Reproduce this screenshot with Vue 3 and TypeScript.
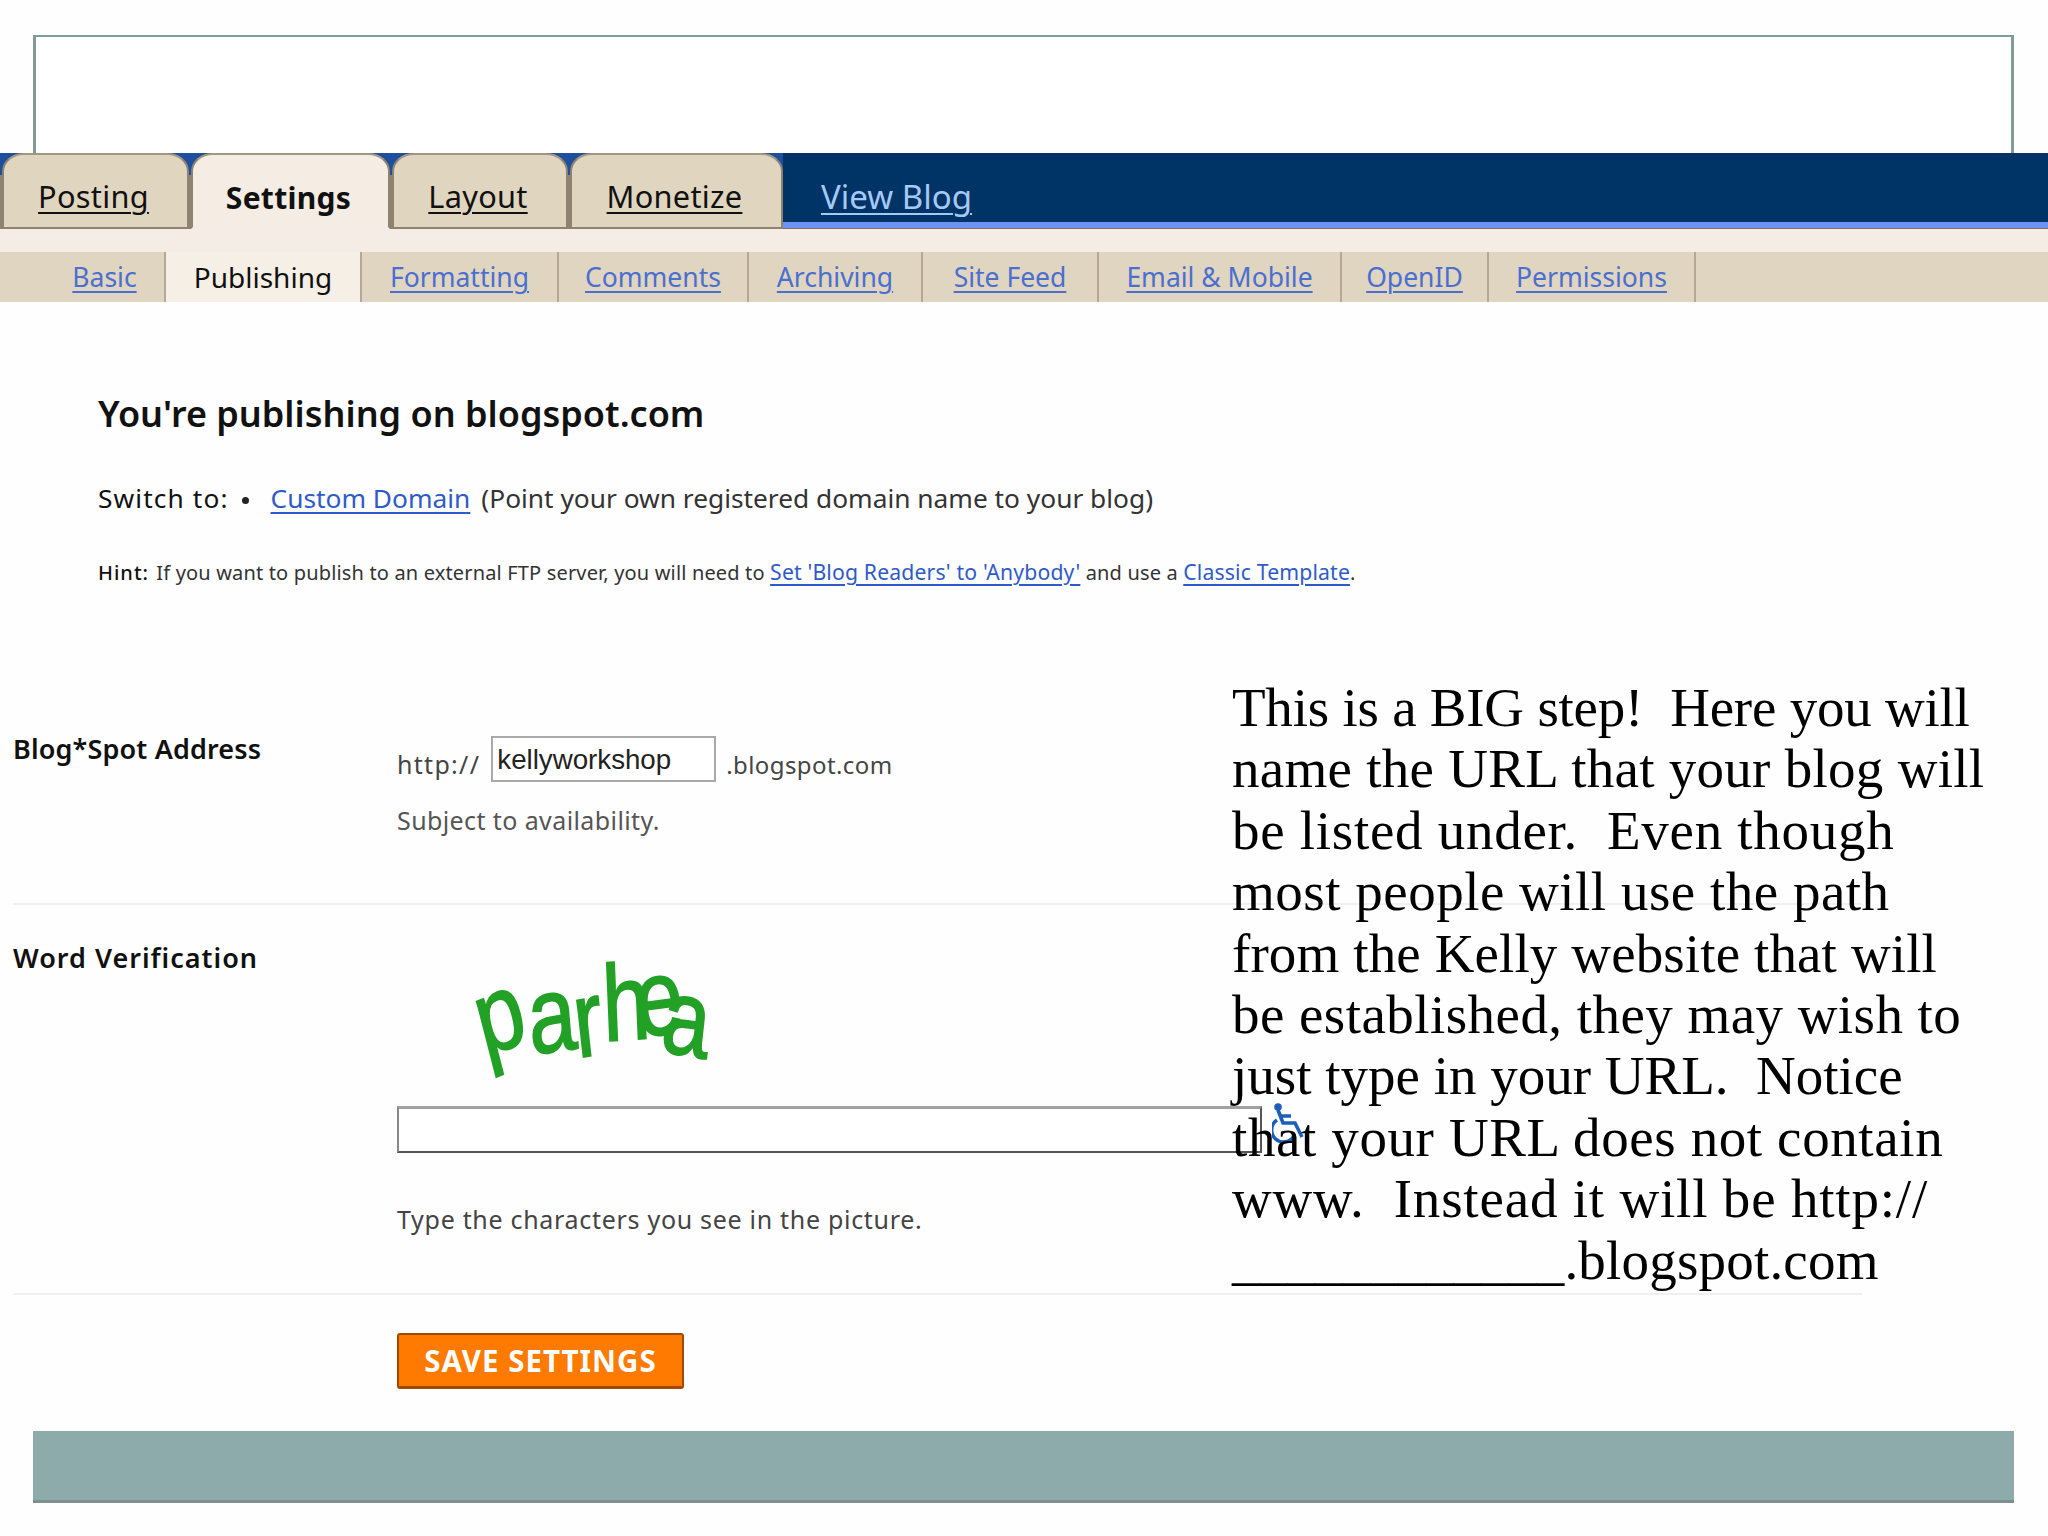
<script setup lang="ts">
interface NavItem { label: string; active?: boolean }
interface TextLine { text: string; spacing: number }
const tabs: NavItem[] = [
  { label: 'Posting' },
  { label: 'Settings', active: true },
  { label: 'Layout' },
  { label: 'Monetize' },
]
const subs: NavItem[] = [
  { label: 'Basic' },
  { label: 'Publishing', active: true },
  { label: 'Formatting' },
  { label: 'Comments' },
  { label: 'Archiving' },
  { label: 'Site Feed' },
  { label: 'Email & Mobile' },
  { label: 'OpenID' },
  { label: 'Permissions' },
]
const lines: TextLine[] = [
  { text: 'This is a BIG step!  Here you will', spacing: -0.23 },
  { text: 'name the URL that your blog will', spacing: 0.28 },
  { text: 'be listed under.  Even though', spacing: 0.72 },
  { text: 'most people will use the path', spacing: 0.5 },
  { text: 'from the Kelly website that will', spacing: 0.12 },
  { text: 'be established, they may wish to', spacing: 0.45 },
  { text: 'just type in your URL.  Notice', spacing: 0 },
  { text: 'that your URL does not contain', spacing: 0.61 },
  { text: 'www.  Instead it will be http://', spacing: 0.81 },
  { text: '____________.blogspot.com', spacing: 0.2 },
]
</script>

<template>
  <div class="slide">
    <div class="frame"></div>
    <nav class="bar">
      <div class="tabs">
        <a v-for="t in tabs" :key="t.label" class="tab" :class="{ on: t.active }">{{ t.label }}</a>
      </div>
      <a class="view">View Blog</a>
    </nav>
    <div class="band"></div>
    <div class="subnav">
      <a v-for="s in subs" :key="s.label" class="sub" :class="{ on: s.active }">{{ s.label }}</a>
    </div>

    <main class="content">
      <h1 class="title">You're publishing on blogspot.com</h1>
      <p class="switch"><span class="dk">Switch to:</span><span class="dot"></span><a class="link">Custom Domain</a><span class="paren">(Point your own registered domain name to your blog)</span></p>
      <p class="hint"><span class="dk hl">Hint:</span> If you want to publish to an external FTP server, you will need to <a class="link big">Set 'Blog Readers' to 'Anybody'</a> and use a <a class="link big">Classic Template</a>.</p>
    </main>

    <section class="form">
      <div class="row r1">
        <div class="label">Blog*Spot Address</div>
        <div class="field">
          <div class="addr">
            <span class="scheme">http://</span>
            <div class="inp">kellyworkshop</div>
            <span class="domain">.blogspot.com</span>
          </div>
          <p class="note sub1">Subject to availability.</p>
        </div>
      </div>
      <div class="row r2">
        <div class="label wide">Word Verification</div>
        <div class="field">
          <svg class="captcha" viewBox="0 0 350 150" width="350" height="150" aria-label="parhea">
            <g transform="scale(0.95 1.2)">
              <text x="93 141 190 218 254 276" y="90 87 90 76 73 84" rotate="-18 -6 -8 -3 -6 8" class="cap">parhea</text>
            </g>
          </svg>
          <div class="word"></div>
          <p class="note type">Type the characters you see in the picture.</p>
        </div>
      </div>
      <div class="actions">
        <button class="save" type="button">SAVE SETTINGS</button>
      </div>
    </section>

    <footer class="foot"></footer>

    <svg class="wheel" viewBox="0 0 34 42" width="34" height="42">
      <circle cx="6" cy="5" r="3.8" fill="#1c5fb8" />
      <path d="M6 8 L11 21 H23 L30 35 M9 14 H19" fill="none" stroke="#1c5fb8" stroke-width="3.6" />
      <path d="M5 18 A12 12 0 1 0 22 34" fill="none" stroke="#1c5fb8" stroke-width="3.6" />
    </svg>

    <div class="note-text">
      <div v-for="(l, i) in lines" :key="i" class="ln" :style="{ letterSpacing: l.spacing + 'px' }">{{ l.text }}</div>
    </div>
  </div>
</template>

<style>
html, body { margin: 0; background: #fff; }
</style>

<style scoped>
.slide {
  position: relative;
  width: 2048px;
  height: 1536px;
  overflow: hidden;
  background: #fefefe;
  font-family: "Noto Sans", "DejaVu Sans", sans-serif;
  color: #333;
}
.frame {
  height: 116px;
  margin: 35px 34px 0 33px;
  border: 3px solid #7f9c97;
  border-bottom: 0;
  border-top-width: 2px;
  background: #fff;
}
.bar {
  height: 76px;
  box-sizing: border-box;
  background: linear-gradient(#003366 0 69px, #6b93f5 69px 75px, #85705f 75px);
  display: flex;
  align-items: stretch;
}
.tabs {
  display: grid;
  grid-template-columns: 189px 201px 178px 215px;
  background: linear-gradient(#1d4f9c 0 22px, #8f8270 22px);
  height: 76px;
  flex: none;
}
.tab {
  display: flex;
  align-items: center;
  justify-content: center;
  box-sizing: border-box;
  padding: 10px 4px 0 0;
  margin-left: 2px;
  background: #e0d5bf;
  border: 2px solid #8f8270;
  border-top-color: #a39782;
  border-radius: 22px 22px 0 0 / 18px 18px 0 0;
  font-size: 30.7px;
  letter-spacing: 0.3px;
  color: #111;
  text-decoration: underline;
  text-decoration-thickness: 2px;
  text-underline-offset: 4px;
}
.tab.on {
  padding-top: 13px;
  background: #f5ede4;
  border-bottom-color: #f5ede4;
  font-weight: 700;
  font-size: 30px;
  text-decoration: none;
}
.view {
  margin-left: 38px;
  padding-top: 24px;
  font-size: 33px;
  line-height: 40px;
  color: #a5c8f5;
  text-decoration: underline;
  text-decoration-thickness: 2px;
  text-underline-offset: 4px;
}
.band { height: 23px; background: #f5ede5; }
.subnav {
  height: 50px;
  padding-left: 45px;
  background: #e0d5c0;
  display: grid;
  grid-template-columns: 121px 196px 197px 190px 174px 176px 243px 147px 207px;
}
.sub {
  display: flex;
  align-items: center;
  justify-content: center;
  box-sizing: border-box;
  border-right: 2px solid #b5a894;
  font-size: 26.5px;
  color: #4a6fd0;
  text-decoration: underline;
  text-decoration-thickness: 2px;
  text-underline-offset: 4px;
}
.sub.on {
  background: #f6efe6;
  color: #111;
  font-size: 28px;
  text-decoration: none;
}
.content { padding: 92px 0 0 98px; }
.title {
  margin: 0;
  font-size: 36px;
  line-height: 40px;
  font-weight: 600;
  color: #111;
}
.switch {
  margin: 47px 0 0;
  font-size: 26.3px;
  line-height: 34px;
  color: #333;
}
.paren { margin-left: 11px; }
.dk { color: #111; letter-spacing: 1.1px; }
.hl { letter-spacing: 1px; font-weight: 500; margin-right: 2px; }
.dot {
  display: inline-block;
  width: 7px;
  height: 7px;
  margin: 0 22px 4px 13px;
  border-radius: 50%;
  background: #222;
}
.link {
  color: #2e5bc9;
  text-decoration: underline;
  text-decoration-thickness: 2px;
  text-underline-offset: 4px;
}
.big { font-size: 21.2px; }
.hint {
  margin: 43px 0 0;
  font-size: 20px;
  letter-spacing: 0.16px;
  line-height: 28px;
  color: #333;
}
.form { margin: 145px 0 0 13px; width: 1849px; }
.row {
  display: grid;
  grid-template-columns: 384px 1fr;
  border-bottom: 2px solid #f0f0f2;
  box-sizing: border-box;
}
.r1 { height: 173px; }
.r2 { height: 390px; padding-top: 36px; }
.label {
  font-size: 27px;
  line-height: 34px;
  font-weight: 600;
  letter-spacing: 0.15px;
  color: #111;
}
.label.wide { letter-spacing: 1px; }
.field { min-width: 0; }
.addr {
  display: flex;
  align-items: center;
  margin-top: 4px;
  height: 46px;
  color: #444;
}
.scheme, .domain { position: relative; top: 5px; }
.scheme { font-size: 25px; letter-spacing: 1.3px; }
.domain { font-size: 24px; letter-spacing: 0.4px; }
.inp {
  display: flex;
  align-items: center;
  box-sizing: border-box;
  width: 225px;
  height: 46px;
  margin: 0 10px 0 11px;
  padding: 2px 4px 0;
  border: 2px solid #a9a9a9;
  background: #fff;
  font-family: "Liberation Sans", sans-serif;
  font-size: 27.7px;
  color: #222;
}
.note {
  margin: 0;
  font-size: 25px;
  line-height: 32px;
  color: #555;
}
.sub1 { margin-top: 22px; letter-spacing: 0.4px; }
.captcha {
  display: block;
  margin-top: 9px;
  overflow: visible;
}
.cap {
  font-family: "Liberation Sans", sans-serif;
  font-size: 90px;
  fill: #22a126;
  stroke: #22a126;
  stroke-width: 1.5;
}
.word {
  box-sizing: border-box;
  width: 865px;
  height: 47px;
  margin-top: 6px;
  border-style: solid;
  border-width: 3px 2px 2px 2px;
  border-color: #a0a0a0 #555 #555 #888;
  background: #fff;
}
.type { margin-top: 50px; color: #444; letter-spacing: 0.7px; }
.actions { padding: 38px 0 0 384px; }
.save {
  display: block;
  width: 287px;
  height: 56px;
  padding: 0;
  border: 2px solid #a04a00;
  border-bottom-width: 3px;
  border-radius: 3px;
  background: #ff7a00;
  color: #fff;
  font-family: "Noto Sans", sans-serif;
  font-size: 29.5px;
  letter-spacing: 1px;
  font-weight: 700;
}
.foot {
  height: 72px;
  margin: 42px 34px 0 33px;
  box-sizing: border-box;
  border-bottom: 3px solid #7f8f8f;
  background: #8dabaa;
}
.wheel { position: absolute; left: 1272px; top: 1102px; }
.note-text {
  position: absolute;
  left: 1232px;
  top: 677px;
  font-family: "Liberation Serif", serif;
  font-size: 55px;
  line-height: 61.4px;
  color: #000;
  white-space: pre;
}
</style>
